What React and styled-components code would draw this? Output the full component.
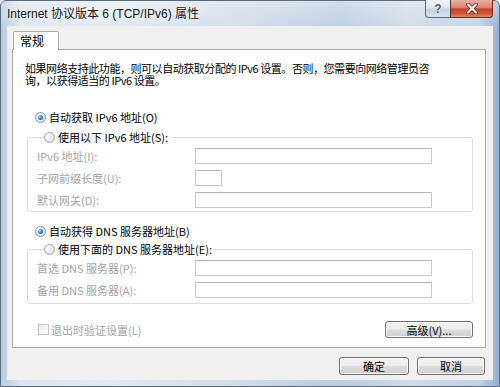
import React from 'react';
import styled, { createGlobalStyle } from 'styled-components';

const GlobalStyle = createGlobalStyle`
  html, body {
    margin: 0;
    padding: 0;
  }
  body {
    width: 500px;
    height: 387px;
    overflow: hidden;
    background: #fff;
  }
`;

const dialogFont = `"Noto Sans CJK SC", "Liberation Sans", sans-serif`;

const introText =
  '如果网络支持此功能，则可以自动获取分配的 IPv6 设置。否则，您需要向网络管理员咨\n询，以获得适当的 IPv6 设置。';

const Window = styled.div`
  width: 500px;
  height: 387px;
  box-sizing: border-box;
  display: flex;
  flex-direction: column;
  padding: 0 6px 6px;
  border: 1px solid #5a6b7e;
  border-radius: 6px 6px 0 0;
  background:
    linear-gradient(to bottom, rgba(255, 255, 255, 0.35), rgba(255, 255, 255, 0) 30px),
    linear-gradient(to right, #b7cbe0 0%, #dbe5ef 4%, #e2eaf2 20%, #d3deea 45%, #bccddf 68%, #cfdbe7 82%, #c2d3e5 96%, #8fb0d4 100%);
`;

const TitleBar = styled.div`
  height: 25px;
  display: flex;
  align-items: flex-start;
  flex-shrink: 0;
`;

const Title = styled.div`
  margin-top: 5px;
  font-family: "Liberation Sans", "Noto Sans CJK SC", sans-serif;
  font-size: 12px;
  line-height: 16px;
  color: #111;
  text-shadow: 0 0 6px rgba(255, 255, 255, 0.95), 0 0 2px rgba(255, 255, 255, 0.9);
`;

const CaptionButtons = styled.div`
  margin-left: auto;
  margin-top: -1px;
  display: flex;
`;

const CaptionButton = styled.div`
  height: 18px;
  box-sizing: border-box;
  display: flex;
  align-items: center;
  justify-content: center;
  border: 1px solid rgba(50, 60, 80, 0.75);
  border-top: none;
`;

const HelpButton = styled(CaptionButton)`
  width: 25px;
  border-right: none;
  border-radius: 0 0 0 4px;
  background: linear-gradient(to bottom, #eef3f8 0%, #dde6ef 48%, #c6d3e0 52%, #d9e3ee 100%);
  color: #55606e;
  font-family: "Liberation Sans", sans-serif;
  font-weight: bold;
  font-size: 12px;
  text-shadow: 0 0 2px #fff;
`;

const CloseButton = styled(CaptionButton)`
  width: 43px;
  border-radius: 0 0 4px 0;
  border-color: #6b2a1e;
  background: linear-gradient(to bottom, #e8b0a2 0%, #d9826c 45%, #c4452a 52%, #cf5434 80%, #e48a62 100%);
`;

const Client = styled.div`
  flex: 1;
  display: flex;
  flex-direction: column;
  padding: 5px 7px 0 5px;
  background: #f0f0f0;
  font-family: ${dialogFont};
  font-size: 11px;
  color: #000;
`;

const TabStrip = styled.div`
  display: flex;
  padding-left: 1px;
`;

const Tab = styled.div`
  position: relative;
  z-index: 1;
  width: 46px;
  height: 19px;
  box-sizing: border-box;
  margin-bottom: -1px;
  padding-left: 6px;
  border: 1px solid #a9a9a9;
  border-bottom: none;
  border-radius: 2px 2px 0 0;
  background: #fff;
  font-size: 12px;
  line-height: 17px;
`;

const Panel = styled.div`
  height: 299px;
  box-sizing: border-box;
  display: flex;
  flex-direction: column;
  border: 1px solid #a9a9a9;
  background: #fff;
  padding-right: 12px;
`;

const Intro = styled.p`
  margin: 12px 0 0 12px;
  line-height: 12px;
  letter-spacing: -0.45px;
  white-space: pre;
`;

const OptionRow = styled.label`
  display: flex;
  align-items: center;
  gap: 3px;
  height: 14px;
  margin: ${p => p.$top}px 0 0 22px;
  white-space: nowrap;
`;

const Radio = styled.span`
  width: 11px;
  height: 11px;
  box-sizing: border-box;
  border-radius: 50%;
  border: 1px solid ${p => (p.$checked ? '#7f9db9' : '#a7a7a7')};
  background: radial-gradient(circle at 40% 35%, #ffffff 0%, #eef0f2 45%, #c9cdd2 100%);
  display: inline-flex;
  align-items: center;
  justify-content: center;
  flex-shrink: 0;

  &::after {
    content: '';
    display: ${p => (p.$checked ? 'block' : 'none')};
    width: 5px;
    height: 5px;
    border-radius: 50%;
    background: radial-gradient(circle at 35% 35%, #a6d4ff 0%, #2f78c4 55%, #184f8f 100%);
  }
`;

const Group = styled.fieldset`
  margin: ${p => p.$top}px 0 0 14px;
  padding: 0 0 ${p => p.$bottom}px 9px;
  border: 1px solid #dcdcdc;
  border-radius: 3px;
  min-width: 0;
`;

const Legend = styled.legend`
  margin-left: 7px;
  padding: 0 3px 0 0;
  height: 14px;
`;

const LegendInner = styled.span`
  display: flex;
  align-items: center;
  gap: 3px;
  height: 14px;
  white-space: nowrap;
`;

const Fields = styled.div`
  display: grid;
  grid-template-columns: 158px auto;
  row-gap: 6px;
  padding-top: 4px;
`;

const FieldLabel = styled.span`
  color: #a3a3a3;
  line-height: 16px;
  white-space: nowrap;
`;

const TextBox = styled.div`
  width: ${p => p.$width}px;
  height: 16px;
  box-sizing: border-box;
  border: 1px solid #c9c9c9;
  border-top-color: #b4b4b4;
  border-radius: 1px;
  background: #fff;
`;

const BottomRow = styled.div`
  display: flex;
  align-items: center;
  margin-top: 17px;
  padding-left: 25px;
`;

const CheckOption = styled.label`
  display: flex;
  align-items: center;
  gap: 2px;
  color: #a3a3a3;
  white-space: nowrap;
`;

const CheckBox = styled.span`
  width: 11px;
  height: 11px;
  box-sizing: border-box;
  border: 1px solid #c4c4c4;
  background: linear-gradient(135deg, #ececec, #fbfbfb);
`;

const Button = styled.button`
  width: ${p => p.$width}px;
  height: ${p => p.$height || 18}px;
  box-sizing: border-box;
  padding: 0;
  margin-left: ${p => (p.$pushRight ? 'auto' : '0')};
  border: 1px solid #707070;
  border-radius: 3px;
  background: linear-gradient(to bottom, #f3f3f3 0%, #ebebeb 48%, #dddddd 52%, #cfcfcf 100%);
  box-shadow: inset 0 0 0 1px #fbfbfb;
  font-family: ${dialogFont};
  font-size: 11px;
  line-height: 14px;
  color: #000;
`;

const Footer = styled.div`
  display: flex;
  justify-content: flex-end;
  gap: 8px;
  margin: 9px 1px 0 0;
`;

function CloseGlyph() {
  return (
    <svg width="14" height="11" viewBox="0 0 14 11">
      <path d="M3 1.5 L11 9.5 M11 1.5 L3 9.5" stroke="#5a1a10" strokeWidth="3.6" strokeLinecap="round" />
      <path d="M3 1.5 L11 9.5 M11 1.5 L3 9.5" stroke="#ffffff" strokeWidth="2.2" strokeLinecap="round" />
    </svg>
  );
}

function App() {
  return (
    <>
      <GlobalStyle />
      <Window>
        <TitleBar>
          <Title>Internet 协议版本 6 (TCP/IPv6) 属性</Title>
          <CaptionButtons>
            <HelpButton>?</HelpButton>
            <CloseButton>
              <CloseGlyph />
            </CloseButton>
          </CaptionButtons>
        </TitleBar>

        <Client>
          <TabStrip>
            <Tab>常规</Tab>
          </TabStrip>

          <Panel>
            <Intro>{introText}</Intro>

            <OptionRow $top={24}>
              <Radio $checked />
              自动获取 IPv6 地址(O)
            </OptionRow>

            <Group $top={6} $bottom={3}>
              <Legend>
                <LegendInner>
                  <Radio />
                  使用以下 IPv6 地址(S):
                </LegendInner>
              </Legend>
              <Fields>
                <FieldLabel>IPv6 地址(I):</FieldLabel>
                <TextBox $width={237} />
                <FieldLabel>子网前缀长度(U):</FieldLabel>
                <TextBox $width={27} />
                <FieldLabel>默认网关(D):</FieldLabel>
                <TextBox $width={237} />
              </Fields>
            </Group>

            <OptionRow $top={12}>
              <Radio $checked />
              自动获得 DNS 服务器地址(B)
            </OptionRow>

            <Group $top={4} $bottom={5}>
              <Legend>
                <LegendInner>
                  <Radio />
                  使用下面的 DNS 服务器地址(E):
                </LegendInner>
              </Legend>
              <Fields>
                <FieldLabel>首选 DNS 服务器(P):</FieldLabel>
                <TextBox $width={237} />
                <FieldLabel>备用 DNS 服务器(A):</FieldLabel>
                <TextBox $width={237} />
              </Fields>
            </Group>

            <BottomRow>
              <CheckOption>
                <CheckBox />
                退出时验证设置(L)
              </CheckOption>
              <Button $width={88} $height={17} $pushRight>高级(V)...</Button>
            </BottomRow>
          </Panel>

          <Footer>
            <Button $width={70}>确定</Button>
            <Button $width={68}>取消</Button>
          </Footer>
        </Client>
      </Window>
    </>
  );
}

export default App;
